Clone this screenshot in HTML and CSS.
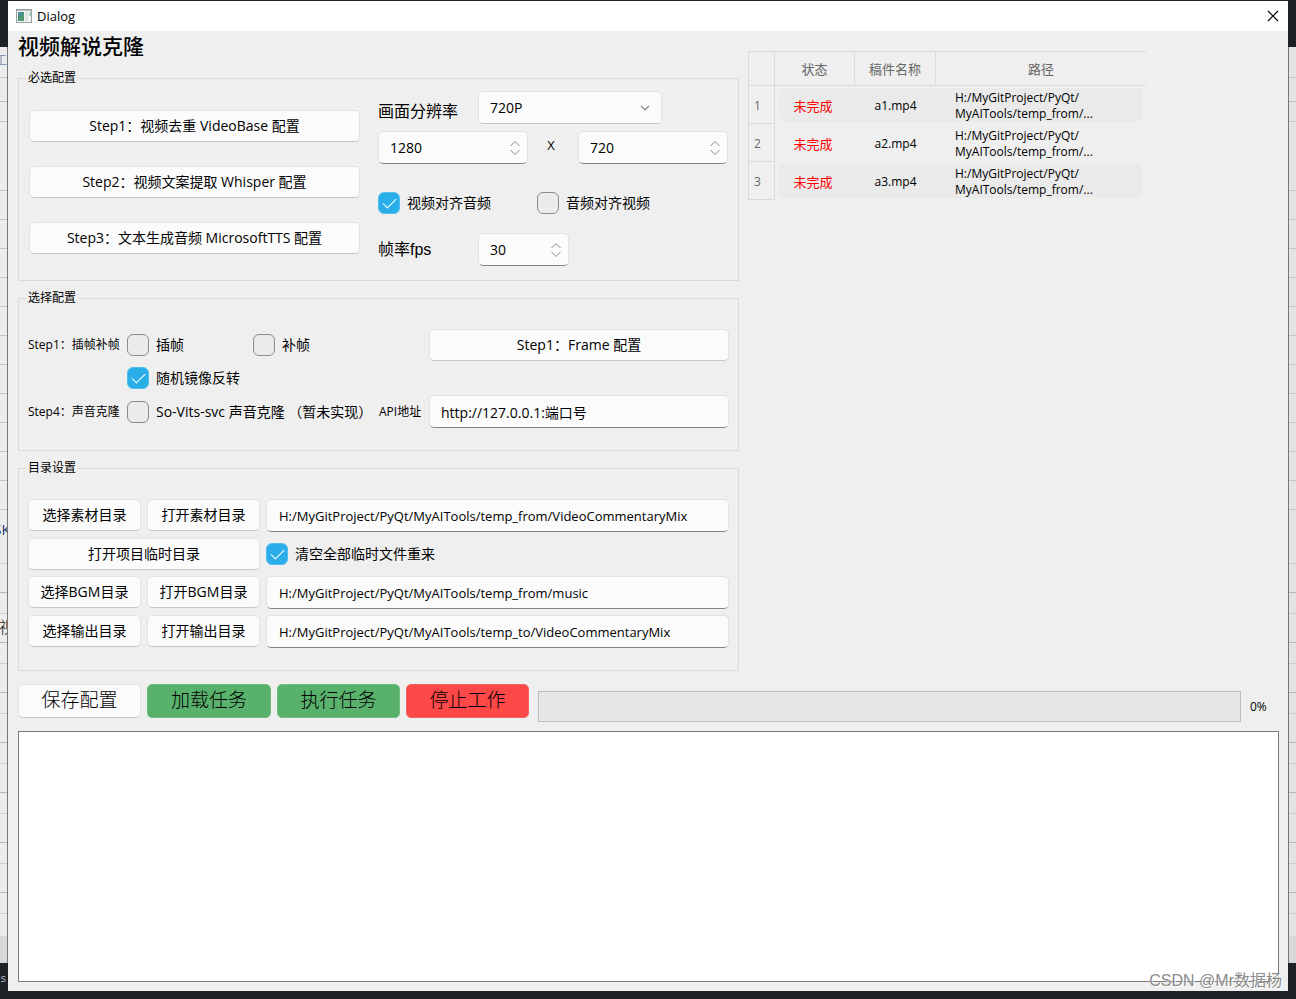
FILE: index.html
```html
<!DOCTYPE html>
<html lang="zh-CN">
<head>
<meta charset="utf-8">
<title>Dialog</title>
<link rel="stylesheet" href="styles.css">
</head>
<body>
<div class="desktop">
  <div class="strip strip-left" aria-hidden="true">
    <span class="peek peek-tab">工</span>
    <span class="peek peek-sk">SK</span>
    <span class="peek peek-shi">视</span>
  </div>
  <main class="window">
    <header class="titlebar">
      <svg class="app-icon" width="16" height="14" viewBox="0 0 16 14">
        <rect x="0.5" y="0.5" width="15" height="13" fill="#f4f6f6" stroke="#9a9fa3"/>
        <path d="M1 1.5h14" stroke="#b9bec2"/>
        <rect x="2" y="3" width="6" height="9" fill="#4a8f9a"/>
        <path d="M2 12V8l6-3v7z" fill="#4d9a72"/>
        <rect x="9" y="3" width="3" height="9" fill="#dfe3e3"/>
        <rect x="13" y="3" width="2" height="4" fill="#a8dcc0"/>
      </svg>
      <span class="titlebar-text">Dialog</span>
      <button class="close" type="button" aria-label="关闭">
        <svg width="12" height="12" viewBox="0 0 12 12"><path d="M1 1l10 10M11 1L1 11" stroke="#000" stroke-width="1.2"/></svg>
      </button>
    </header>
    <div class="content">
      <div class="columns">
        <div class="settings">
          <h1>视频解说克隆</h1>
          <fieldset class="group required">
            <legend>必选配置</legend>
            <div class="required-grid">
              <div class="steps">
                <button class="btn" type="button">Step1：视频去重 VideoBase 配置</button>
                <button class="btn" type="button">Step2：视频文案提取 Whisper 配置</button>
                <button class="btn" type="button">Step3：文本生成音频 MicrosoftTTS 配置</button>
              </div>
              <div class="video">
                <div class="row res-row">
                  <label class="big-label" for="res">画面分辨率</label>
                  <span class="select-wrap">
                    <select class="field" id="res"><option>720P</option></select>
                    <svg class="chevron" width="10" height="6" viewBox="0 0 10 6"><path d="M1 1l4 4 4-4" fill="none" stroke="#858585" stroke-width="1.2"/></svg>
                  </span>
                </div>
                <div class="row size-row">
                  <span class="spin"><input class="field" type="number" value="1280" aria-label="宽度"><svg class="arrows" width="10" height="14" viewBox="0 0 10 14"><path d="M0.500 5L5 0.500 9.500 5M0.500 9L5 13.500 9.500 9" fill="none" stroke="#8c8c8c"/></svg></span>
                  <span class="times">X</span>
                  <span class="spin"><input class="field" type="number" value="720" aria-label="高度"><svg class="arrows" width="10" height="14" viewBox="0 0 10 14"><path d="M0.500 5L5 0.500 9.500 5M0.500 9L5 13.500 9.500 9" fill="none" stroke="#8c8c8c"/></svg></span>
                </div>
                <div class="row align-row">
                  <label class="check"><input type="checkbox" checked>视频对齐音频</label>
                  <label class="check"><input type="checkbox">音频对齐视频</label>
                </div>
                <div class="row fps-row">
                  <label class="big-label" for="fps">帧率fps</label>
                  <span class="spin spin-small"><input class="field" id="fps" type="number" value="30"><svg class="arrows" width="10" height="14" viewBox="0 0 10 14"><path d="M0.500 5L5 0.500 9.500 5M0.500 9L5 13.500 9.500 9" fill="none" stroke="#8c8c8c"/></svg></span>
                </div>
              </div>
            </div>
          </fieldset>

          <fieldset class="group">
            <legend>选择配置</legend>
            <div class="optional-grid">
              <span class="small">Step1：插帧补帧</span>
              <label class="check"><input type="checkbox">插帧</label>
              <label class="check"><input type="checkbox">补帧</label>
              <button class="btn frame-btn" type="button">Step1：Frame 配置</button>
              <label class="check mirror"><input type="checkbox" checked>随机镜像反转</label>
              <span class="small row-label">Step4：声音克隆</span>
              <label class="check vits"><input type="checkbox"><span>So-Vits-svc 声音克隆 （暂未实现）</span></label>
              <label class="small" for="api">API地址</label>
              <input class="field" id="api" type="text" value="http://127.0.0.1:端口号">
            </div>
          </fieldset>

          <fieldset class="group">
            <legend>目录设置</legend>
            <div class="dirs-grid">
              <button class="btn" type="button">选择素材目录</button>
              <button class="btn" type="button">打开素材目录</button>
              <input class="field path-field" type="text" aria-label="素材目录" value="H:/MyGitProject/PyQt/MyAITools/temp_from/VideoCommentaryMix">
              <button class="btn temp-btn" type="button">打开项目临时目录</button>
              <label class="check"><input type="checkbox" checked>清空全部临时文件重来</label>
              <button class="btn" type="button">选择BGM目录</button>
              <button class="btn" type="button">打开BGM目录</button>
              <input class="field path-field" type="text" aria-label="BGM目录" value="H:/MyGitProject/PyQt/MyAITools/temp_from/music">
              <button class="btn" type="button">选择输出目录</button>
              <button class="btn" type="button">打开输出目录</button>
              <input class="field path-field" type="text" aria-label="输出目录" value="H:/MyGitProject/PyQt/MyAITools/temp_to/VideoCommentaryMix">
            </div>
          </fieldset>
        </div>

        <div class="tasks">
          <table>
            <thead>
              <tr><th class="num"></th><th class="state">状态</th><th class="name">稿件名称</th><th class="path">路径</th></tr>
            </thead>
            <tbody>
              <tr><th scope="row">1</th><td class="todo">未完成</td><td>a1.mp4</td><td>H:/MyGitProject/PyQt/<br>MyAITools/temp_from/...</td></tr>
              <tr><th scope="row">2</th><td class="todo">未完成</td><td>a2.mp4</td><td>H:/MyGitProject/PyQt/<br>MyAITools/temp_from/...</td></tr>
              <tr><th scope="row">3</th><td class="todo">未完成</td><td>a3.mp4</td><td>H:/MyGitProject/PyQt/<br>MyAITools/temp_from/...</td></tr>
            </tbody>
          </table>
        </div>
      </div>

      <div class="actions">
        <button class="btn action" type="button">保存配置</button>
        <button class="btn action green" type="button">加载任务</button>
        <button class="btn action green" type="button">执行任务</button>
        <button class="btn action red" type="button">停止工作</button>
        <div class="progress" role="progressbar" aria-label="进度" aria-valuenow="0" aria-valuemin="0" aria-valuemax="100"></div>
        <span class="percent">0%</span>
      </div>
      <textarea class="log" aria-label="日志"></textarea>
    </div>
  </main>
  <div class="strip strip-right" aria-hidden="true"></div>
  <span class="peek-code" aria-hidden="true">s</span>
  <div class="watermark">CSDN @Mr数据杨</div>
</div>
</body>
</html>
```
FILE: styles.css
```css
* { box-sizing: border-box; }

body {
  margin: 0;
  background: #1e2227;
  color: #000;
  font: 14px/20px "Open Sans", "Noto Sans CJK SC", sans-serif;
}

button, input, select, textarea { font: inherit; color: inherit; margin: 0; }

.desktop {
  position: relative;
  display: grid;
  grid-template-columns: 8px minmax(0, 1fr) 8px;
  min-height: 100vh;
  padding: 1px 0 8px;
}

/* Slivers of the application behind the dialog */
.strip {
  position: relative;
  overflow: hidden;
  margin-bottom: 28px;
  margin-top: 46px;
  background:
    linear-gradient(#c4c4c4, #c4c4c4) 0 30px / 100% 1px no-repeat,
    linear-gradient(#bcbcbc, #bcbcbc) 0 54px / 100% 1px no-repeat,
    linear-gradient(#c4c4c4, #c4c4c4) 0 74px / 100% 1px no-repeat,
    linear-gradient(#d8d8d8, #d8d8d8) 0 889px / 100% 50px no-repeat,
    repeating-linear-gradient(transparent 0 28px, #c4c4c4 28px 29px) 0 115px / 100% 348px no-repeat,
    repeating-linear-gradient(#cfcfcf 0 1px, transparent 1px 29px, #b8b8b8 29px 30px, transparent 30px 50px) 0 516px / 100% 360px no-repeat,
    #ececec;
}
.strip-left { border-right: 1px solid #777; }
.strip-right {
  border-left: 1px solid #777;
  background-color: #e4e4e4;
}
.peek { position: absolute; right: 0; line-height: 20px; }
.peek-tab { top: 4px; color: #8899b0; font-size: 12px; }
.peek-sk { top: 473px; right: -3px; color: #173a6b; }
.peek-shi { top: 570px; right: -8px; font-size: 16px; font-weight: 300; }
.peek-code {
  position: absolute;
  left: 0;
  bottom: 12px;
  color: #a9b7c6;
  font: 11px/16px "DejaVu Sans Mono", monospace;
}

.window { display: flex; flex-direction: column; background: #efefef; }

.titlebar {
  display: flex;
  align-items: center;
  height: 30px;
  padding: 0 9px 0 8px;
  background: #fff;
  font-size: 13px;
}
.titlebar-text { margin-left: 5px; }
.close {
  display: flex;
  margin-left: auto;
  padding: 0;
  border: 0;
  background: none;
}

.content {
  display: flex;
  flex: 1;
  flex-direction: column;
  padding: 0 9px 9px 10px;
}
.columns {
  display: grid;
  grid-template-columns: minmax(0, 721fr) minmax(0, 531fr);
  gap: 9px;
}
.settings { display: flex; flex-direction: column; gap: 8px; }
h1 { margin: 0; font-size: 21px; line-height: 30px; font-weight: 500; }

.group {
  min-width: 0;
  margin: 0;
  padding: 22px 9px;
  border: 1px solid #dadada;
}
legend {
  margin-left: -2px;
  padding: 0 2px;
  font-size: 12px;
  line-height: 18px;
}
.required { padding: 4px 10px 14px; }
.required legend { margin-left: -3px; }

.btn, .field {
  min-width: 0;
  border: 1px solid #e2e2e2;
  border-radius: 5px;
  background: #fbfbfb;
}
.btn {
  height: 32px;
  padding: 0;
  border-bottom-color: #c6c6c6;
  text-align: center;
  white-space: nowrap;
}
.field {
  width: 100%;
  height: 33px;
  padding: 0 11px;
  border-bottom-color: #868686;
}
.path-field { padding: 0 12px; font-size: 13px; }

.required-grid {
  display: grid;
  grid-template-columns: minmax(0, 331fr) minmax(0, 350fr);
  gap: 18px;
}
.steps { display: flex; flex-direction: column; gap: 24px; padding-top: 19px; }
.row { display: flex; align-items: center; }
.res-row { align-items: flex-end; }
.big-label {
  width: 100px;
  font: 16px/24px "Liberation Sans", "Noto Sans CJK SC", sans-serif;
}
.select-wrap { position: relative; width: 184px; }
.select-wrap .field { display: block; appearance: none; border-bottom-color: #c6c6c6; }
.chevron { position: absolute; right: 12px; top: 14px; }
.size-row { margin-top: 7px; }
.spin { position: relative; flex: 1; }
.spin .field { display: block; appearance: textfield; }
.spin .field::-webkit-inner-spin-button { appearance: none; margin: 0; }
.arrows { position: absolute; right: 8px; top: 10px; }
.times { width: 50px; padding: 0 4px 6px 0; font-size: 13px; text-align: center; }
.align-row { margin-top: 28px; }
.align-row .check { width: 159px; }
.fps-row { margin-top: 19px; }
.spin-small { flex: none; width: 91px; }

.check { display: flex; align-items: center; gap: 7px; white-space: nowrap; }
.check input {
  flex: none;
  position: relative;
  width: 22px;
  height: 22px;
  border: 1px solid #8c8c8c;
  border-radius: 6px;
  background: #ebebeb;
  appearance: none;
}
.check input:checked { border-color: #55bdee; background: #29aeea; }
.check input:checked::before {
  content: "";
  position: absolute;
  left: 4px;
  top: 5px;
  width: 12px;
  height: 6px;
  border: solid #fff;
  border-width: 0 0 1px 1px;
  transform: rotate(-45deg);
}

.optional-grid {
  display: grid;
  grid-template-columns: 99px 126px 126px 50px minmax(0, 1fr);
  row-gap: 6px;
  align-items: center;
}
.small { font-size: 12px; white-space: nowrap; }
.frame-btn { grid-column: 5; }
.mirror { grid-column: 2 / 6; }
.row-label { grid-column: 1; }
.vits { grid-column: 2 / 4; }

.dirs-grid {
  display: grid;
  grid-template-columns: 113px 113px minmax(0, 1fr);
  gap: 6px;
}
.temp-btn { grid-column: 1 / 3; }

.tasks { padding-top: 20px; }
table {
  width: 398px;
  border-spacing: 0;
  table-layout: fixed;
  border-left: 1px solid #dadada;
}
th { padding: 0; color: #666; font-weight: 400; }
thead th {
  height: 35px;
  border: solid #dadada;
  border-width: 1px 1px 1px 0;
  font-size: 13px;
}
thead .path { border-right: 0; }
.num { width: 26px; }
.state { width: 80px; }
.name { width: 81px; }
tbody th {
  height: 38px;
  padding: 2px 0 0 5px;
  border: solid #dadada;
  border-width: 0 1px 1px 0;
  font-size: 12px;
  text-align: left;
}
td {
  padding: 2px 0 0;
  border: 2px solid transparent;
  border-width: 2px 0;
  background-clip: padding-box;
  font-size: 12px;
  line-height: 16px;
  text-align: center;
}
td:nth-child(2) { border-left-width: 4px; border-radius: 8px 0 0 8px; }
td:last-child {
  padding-left: 19px;
  border-right-width: 4px;
  border-radius: 0 8px 8px 0;
  text-align: left;
}
tbody tr:nth-child(odd) td { background-color: #eaeaea; }
.todo { padding-right: 8px; color: #f00; font-size: 13px; }

.actions {
  display: grid;
  grid-template-columns: 123px 124px 123px 123px minmax(0, 1fr) 32px;
  column-gap: 6px;
  padding-top: 13px;
}
.action { height: 34px; padding-bottom: 2px; font-size: 19px; font-weight: 300; line-height: 28px; }
.green { border-color: #6fbd80; background: #59b26c; }
.red { border-color: #f36262; background: #fd4848; }
.progress {
  height: 31px;
  margin: 7px 0 0 3px;
  border: 1px solid #bcbcbc;
  background: #e6e6e6;
}
.percent { padding: 13px 0 0 3px; font-size: 12px; }

.log {
  flex: 1;
  width: 100%;
  min-height: 120px;
  margin-top: 13px;
  border: 1px solid #7a7a7a;
  background: #fff;
  resize: none;
}
.actions + .log { margin-top: 9px; }

.watermark {
  position: absolute;
  right: 14px;
  bottom: 6px;
  color: #8c8c8c;
  font: 16px/24px "Liberation Sans", "Noto Sans CJK SC", sans-serif;
  text-shadow: 1px 1px 0 #fff;
}
```
